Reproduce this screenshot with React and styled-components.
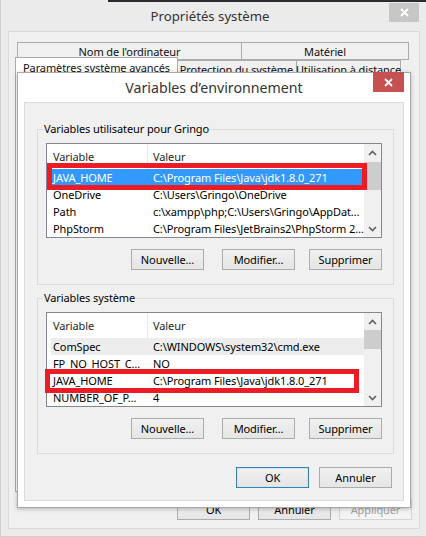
import React from 'react';
import styled, { createGlobalStyle } from 'styled-components';

const FONT = `"Noto Sans", "Open Sans", "DejaVu Sans", sans-serif`;

const GlobalStyle = createGlobalStyle`
  html, body {
    margin: 0;
    padding: 0;
    background: #ebebeb;
  }
  body {
    font-family: ${FONT};
    font-size: 11px;
    letter-spacing: -0.1px;
    color: #000;
  }
  * { box-sizing: border-box; }
`;

const userVars = [
  { name: 'JAVA_HOME', value: 'C:\\Program Files\\Java\\jdk1.8.0_271', state: 'selected' },
  { name: 'OneDrive', value: 'C:\\Users\\Gringo\\OneDrive' },
  { name: 'Path', value: 'c:\\xampp\\php;C:\\Users\\Gringo\\AppDat…' },
  { name: 'PhpStorm', value: 'C:\\Program Files\\JetBrains2\\PhpStorm 2…' },
];

const systemVars = [
  { name: 'ComSpec', value: 'C:\\WINDOWS\\system32\\cmd.exe', state: 'inactive' },
  { name: 'FP_NO_HOST_C…', value: 'NO' },
  { name: 'JAVA_HOME', value: 'C:\\Program Files\\Java\\jdk1.8.0_271' },
  { name: 'NUMBER_OF_P…', value: '4' },
];

const CloseIcon = () => (
  <svg width="9" height="9" viewBox="0 0 9 9">
    <path d="M1 1 L8 8 M8 1 L1 8" stroke="#fff" strokeWidth="1.8" fill="none" />
  </svg>
);

const Chevron = ({ down }) => (
  <svg width="9" height="6" viewBox="0 0 9 6">
    <polyline
      points={down ? '1,1 4.5,4.5 8,1' : '1,5 4.5,1.5 8,5'}
      stroke="#606060"
      strokeWidth="1.6"
      fill="none"
    />
  </svg>
);

const VarList = ({ rows, thumbTop, thumbSize, mark }) => (
  <List>
    <ListBody>
      <Header>
        <HeadCell $first>Variable</HeadCell>
        <HeadCell>Valeur</HeadCell>
      </Header>
      {rows.map((r) => (
        <Row key={r.name + r.value} $state={r.state}>
          <NameCell>{r.name}</NameCell>
          <ValueCell>{r.value}</ValueCell>
        </Row>
      ))}
    </ListBody>
    <ScrollBar>
      <Arrow><Chevron /></Arrow>
      <Track>
        <Thumb $top={thumbTop} $size={thumbSize} />
      </Track>
      <Arrow><Chevron down /></Arrow>
    </ScrollBar>
    <Mark $left={mark.left} $top={mark.top} $w={mark.w} $h={mark.h} />
  </List>
);

const App = () => (
  <>
    <GlobalStyle />
    <Window>
      <TitleBar>
        <span />
        <Title $size={13.2}>Propriétés système</Title>
        <CloseButton $tone="gray"><CloseIcon /></CloseButton>
      </TitleBar>
      <Client>
        <TabStrip>
          <TabRow>
            <Tab $w={225}>Nom de l'ordinateur</Tab>
            <Tab $w={168}>Matériel</Tab>
          </TabRow>
          <TabRow>
            <Tab $w={163} $active>Paramètres système avancés</Tab>
            <Tab $w={121}>Protection du système</Tab>
            <Tab $w={105}>Utilisation à distance</Tab>
          </TabRow>
        </TabStrip>
        <TabPage />
        <ButtonRow $gap={8} $right={-1} $top={7}>
          <Button>OK</Button>
          <Button>Annuler</Button>
          <Button $disabled>Appliquer</Button>
        </ButtonRow>
      </Client>

      <Dialog>
        <DialogTitleBar>
          <span />
          <Title $size={14.2}>Variables d’environnement</Title>
          <CloseButton $tone="red"><CloseIcon /></CloseButton>
        </DialogTitleBar>
        <DialogClient>
          <Group>
            <Legend>Variables utilisateur pour Gringo</Legend>
            <VarList
              rows={userVars}
              thumbTop={1}
              thumbSize={28}
              mark={{ left: 0, top: 19, w: 320, h: 27 }}
            />
            <ButtonRow $gap={14} $right={0} $top={11}>
              <Button $extra={4}>Nouvelle…</Button>
              <Button>Modifier…</Button>
              <Button>Supprimer</Button>
            </ButtonRow>
          </Group>
          <Group $spaced>
            <Legend>Variables système</Legend>
            <VarList
              rows={systemVars}
              thumbTop={0}
              thumbSize={19}
              mark={{ left: -2, top: 56, w: 314, h: 24 }}
            />
            <ButtonRow $gap={14} $right={0} $top={11}>
              <Button $extra={4}>Nouvelle…</Button>
              <Button>Modifier…</Button>
              <Button>Supprimer</Button>
            </ButtonRow>
          </Group>
          <ButtonRow $gap={10} $right={2} $top={13}>
            <Button $default>OK</Button>
            <Button>Annuler</Button>
          </ButtonRow>
        </DialogClient>
      </Dialog>
    </Window>
  </>
);

const Window = styled.div`
  position: relative;
  width: 426px;
  height: 537px;
  display: flex;
  flex-direction: column;
  background: #ebebeb;
  border-bottom: 1px solid #cfcfcf;
  border-left: 1px solid #cfcfcf;
  overflow: hidden;
`;

const TitleBar = styled.div`
  height: 31px;
  flex: none;
  display: grid;
  grid-template-columns: 1fr auto 1fr;
  align-items: center;
  padding-right: 7px;
  background: linear-gradient(to right, transparent 107px, #2b2b33 107px) top / 100% 2px no-repeat;
`;

const Title = styled.div`
  font-family: ${FONT};
  font-size: ${(p) => p.$size}px;
  letter-spacing: 0;
  color: #333;
  white-space: nowrap;
`;

const CloseButton = styled.div`
  justify-self: end;
  align-self: start;
  margin-top: ${(p) => (p.$tone === 'red' ? '-1px' : '3px')};
  width: ${(p) => (p.$tone === 'red' ? 31 : 30)}px;
  height: ${(p) => (p.$tone === 'red' ? 20 : 19)}px;
  display: flex;
  align-items: center;
  justify-content: center;
  background: ${(p) => (p.$tone === 'red' ? '#c75050' : '#c7c7c7')};
`;

const Client = styled.div`
  flex: 1;
  display: flex;
  flex-direction: column;
  margin: 0 6px 7px 7px;
  padding: 10px 8px 8px 6px;
  border: 1px solid #d9d9d9;
  background: #f0f0f0;
`;

const TabStrip = styled.div`
  margin: 0 2px;
  display: flex;
  flex-direction: column;
`;

const TabRow = styled.div`
  display: flex;
  height: 18px;
`;

const Tab = styled.div`
  position: relative;
  width: ${(p) => p.$w}px;
  height: ${(p) => (p.$active ? 22 : 18)}px;
  margin: ${(p) => (p.$active ? '-3px -1px 0 -2px' : '0 0 0 -1px')};
  z-index: ${(p) => (p.$active ? 2 : 1)};
  display: flex;
  align-items: ${(p) => (p.$active ? 'flex-start' : 'center')};
  justify-content: center;
  padding-top: ${(p) => (p.$active ? 2 : 0)}px;
  border: 1px solid #acacac;
  border-bottom: ${(p) => (p.$active ? 'none' : '1px solid #acacac')};
  background: ${(p) => (p.$active ? '#fff' : '#f0f0f0')};
  font-size: 11px;
  color: #111;
  white-space: nowrap;
  &:first-child { margin-left: ${(p) => (p.$active ? -2 : 0)}px; }
`;

const TabPage = styled.div`
  flex: 1;
  border: 1px solid #acacac;
  background: #fff;
`;

const ButtonRow = styled.div`
  display: flex;
  justify-content: flex-end;
  gap: ${(p) => p.$gap}px;
  margin-top: ${(p) => p.$top}px;
  margin-right: ${(p) => p.$right}px;
`;

const Button = styled.div`
  width: 73px;
  height: 21px;
  margin-right: ${(p) => p.$extra || 0}px;
  display: flex;
  align-items: center;
  justify-content: center;
  font-size: 11px;
  color: ${(p) => (p.$disabled ? '#a3a3a3' : '#000')};
  border: 1px solid ${(p) => (p.$default ? '#3c7fb1' : p.$disabled ? '#d5d5d5' : '#acacac')};
  box-shadow: ${(p) => (p.$default ? 'inset 0 0 0 1px #cde6f7' : 'none')};
  background: ${(p) => (p.$disabled ? '#f4f4f4' : 'linear-gradient(#f0f0f0, #e5e5e5)')};
`;

const Dialog = styled.div`
  position: absolute;
  left: 16px;
  top: 72px;
  width: 394px;
  height: 436px;
  display: flex;
  flex-direction: column;
  padding: 0 6px 6px;
  border: 1px solid #a8a8a8;
  background: #fff;
  box-shadow: 0 1px 4px rgba(0, 0, 0, 0.25);
  z-index: 5;
`;

const DialogTitleBar = styled.div`
  height: 29px;
  flex: none;
  display: grid;
  grid-template-columns: 1fr auto 1fr;
  align-items: center;
`;

const DialogClient = styled.div`
  flex: 1;
  display: flex;
  flex-direction: column;
  padding: 18px 9px 0 12px;
  border: 1px solid #dadada;
  background: #f0f0f0;
`;

const Group = styled.fieldset`
  margin: ${(p) => (p.$spaced ? 5 : 0)}px 0 0;
  padding: 6px 11px 14px 8px;
  min-width: 0;
  border: 1px solid #dcdcdc;
`;

const Legend = styled.legend`
  margin-left: -3px;
  padding: 0 1px;
  font-size: 11px;
  line-height: 16px;
  color: #000;
`;

const List = styled.div`
  position: relative;
  width: 336px;
  height: 95px;
  display: grid;
  grid-template-columns: 1fr 17px;
  border: 1px solid #828790;
  background: #fff;
`;

const ListBody = styled.div`
  overflow: hidden;
`;

const Header = styled.div`
  height: 25px;
  display: grid;
  grid-template-columns: 101px 1fr;
`;

const HeadCell = styled.div`
  display: flex;
  align-items: center;
  padding-left: ${(p) => (p.$first ? 6 : 5)}px;
  border-right: ${(p) => (p.$first ? '1px solid #e5e5e5' : 'none')};
  font-size: 11px;
  color: #1e1e1e;
`;

const Row = styled.div`
  height: 17px;
  margin-left: 4px;
  display: grid;
  grid-template-columns: 96px 1fr;
  align-items: center;
  font-size: 11px;
  white-space: nowrap;
  color: ${(p) => (p.$state === 'selected' ? '#fff' : '#000')};
  background: ${(p) =>
    p.$state === 'selected' ? '#3399ff' : p.$state === 'inactive' ? '#ededed' : 'transparent'};
`;

const NameCell = styled.span`
  padding-left: 2px;
  overflow: hidden;
`;

const ValueCell = styled.span`
  padding-left: 6px;
  overflow: hidden;
`;

const ScrollBar = styled.div`
  display: flex;
  flex-direction: column;
  background: #f0f0f0;
`;

const Arrow = styled.div`
  height: 17px;
  flex: none;
  display: flex;
  align-items: center;
  justify-content: center;
`;

const Track = styled.div`
  flex: 1;
`;

const Thumb = styled.div`
  margin: ${(p) => p.$top}px 0 0;
  height: ${(p) => p.$size}px;
  background: #cdcdcd;
`;

const Mark = styled.div`
  position: absolute;
  left: ${(p) => p.$left}px;
  top: ${(p) => p.$top}px;
  width: ${(p) => p.$w}px;
  height: ${(p) => p.$h}px;
  border: 5px solid #ed1c24;
  pointer-events: none;
`;

export default App;
